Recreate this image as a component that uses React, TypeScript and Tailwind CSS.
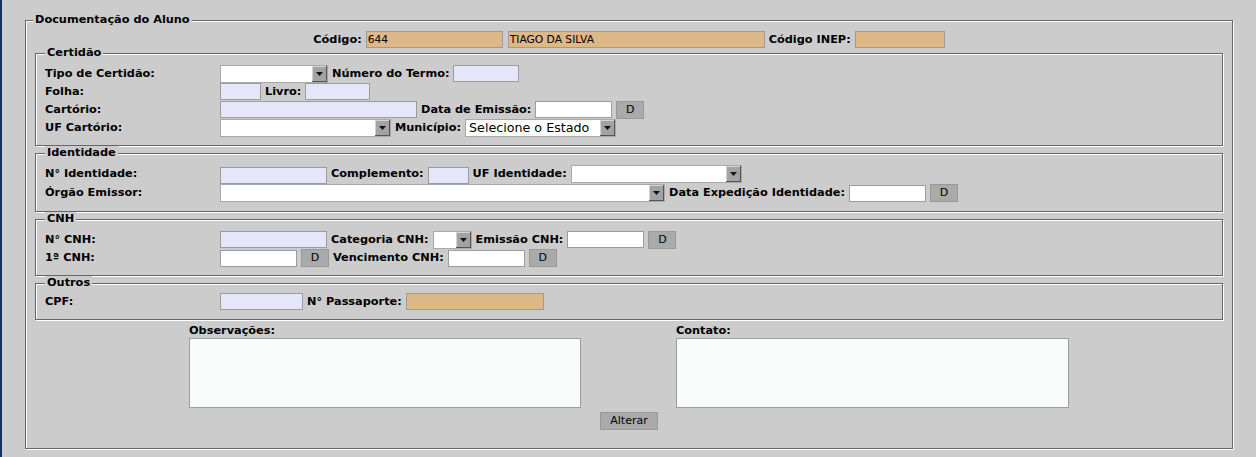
import { FC, ReactNode } from "react";

interface GroupProps {
  title: string;
  outer?: boolean;
  className?: string;
  children: ReactNode;
}

const Group: FC<GroupProps> = ({ title, outer, className = "", children }) => (
  <div
    className={`relative border border-[#666666] shadow-[1px_1px_0_#ffffff,inset_1px_1px_0_#ffffff] ${className}`}
  >
    <span
      className={`absolute -top-[8px] ${
        outer ? "left-[7px]" : "left-[9px]"
      } bg-[#cccccc] px-[2px] text-[11.3px] font-bold leading-[14px] text-black whitespace-nowrap`}
    >
      {title}
    </span>
    {children}
  </div>
);

const Label: FC<{ children: ReactNode; className?: string }> = ({
  children,
  className = "",
}) => (
  <span
    className={`text-[11.3px] font-bold leading-[14px] text-black whitespace-nowrap ${className}`}
  >
    {children}
  </span>
);

const tones = {
  lav: "bg-[#e6e6fa]",
  white: "bg-white",
  tan: "bg-[#deb887]",
};

const Field: FC<{
  className: string;
  tone?: keyof typeof tones;
  value?: string;
}> = ({ className, tone = "white", value = "" }) => (
  <input
    readOnly
    value={value}
    className={`h-[17px] shrink-0 border border-[#9c9c9c] px-[1px] text-[10.7px] leading-[15px] text-black outline-none ${tones[tone]} ${className}`}
  />
);

const Select: FC<{ className: string; text?: string }> = ({
  className,
  text = "",
}) => (
  <div
    className={`flex h-[18px] shrink-0 border border-[#a8a8a8] bg-white ${className}`}
  >
    <span className="flex-1 overflow-hidden whitespace-nowrap pl-[3px] text-[12.7px] leading-[16px] text-black">
      {text}
    </span>
    <span className="flex w-[15px] items-center justify-center bg-[#a3a3a3] shadow-[inset_-1px_-1px_0_#555555,inset_1px_1px_0_#d4d4d4]">
      <svg width="7" height="4" viewBox="0 0 7 4">
        <path d="M0 0h7L3.5 4z" fill="#111111" />
      </svg>
    </span>
  </div>
);

const Btn: FC<{ children: ReactNode; className: string }> = ({
  children,
  className,
}) => (
  <button
    className={`h-[18px] shrink-0 border border-[#999999] bg-[#aaaaaa] text-[11px] leading-[16px] text-black ${className}`}
  >
    {children}
  </button>
);

const Row: FC<{ label: string; className: string; children: ReactNode }> = ({
  label,
  className,
  children,
}) => (
  <div className={`flex items-center gap-[4px] ${className}`}>
    <Label className="w-[171px] shrink-0">{label}</Label>
    {children}
  </div>
);

const App: FC = () => {
  return (
    <div className="h-[457px] w-[1256px] overflow-hidden border-l-2 border-[#14306e] bg-[#cccccc] pl-[23px] pt-[20px] font-['DejaVu_Sans',Verdana,sans-serif]">
      <Group
        title="Documentação do Aluno"
        outer
        className="h-[429px] w-[1208px] px-[9px] pt-[10px]"
      >
        <div className="flex h-[17px] items-center justify-center gap-[4px]">
          <Label>Código:</Label>
          <Field className="w-[137px]" tone="tan" value="644" />
          <Field className="ml-[1px] w-[257px]" tone="tan" value="TIAGO DA SILVA" />
          <Label>Código INEP:</Label>
          <Field className="w-[90px]" tone="tan" />
        </div>

        <Group title="Certidão" className="mt-[5px] h-[93px] pl-[9px] pt-[10px]">
          <Row label="Tipo de Certidão:" className="h-[19px]">
            <Select className="w-[108px]" />
            <Label>Número do Termo:</Label>
            <Field className="w-[66px]" tone="lav" />
          </Row>
          <Row label="Folha:" className="h-[17px]">
            <Field className="w-[41px]" tone="lav" />
            <Label>Livro:</Label>
            <Field className="w-[65px]" tone="lav" />
          </Row>
          <Row label="Cartório:" className="h-[19px]">
            <Field className="w-[197px]" tone="lav" />
            <Label>Data de Emissão:</Label>
            <Field className="w-[77px]" />
            <Btn className="w-[28px]">D</Btn>
          </Row>
          <Row label="UF Cartório:" className="h-[18px]">
            <Select className="w-[171px]" />
            <Label>Município:</Label>
            <Select className="w-[151px]" text="Selecione o Estado" />
          </Row>
        </Group>

        <Group title="Identidade" className="mt-[7px] h-[59px] pl-[9px] pt-[10px]">
          <Row label="N° Identidade:" className="h-[20px]">
            <Field className="mt-[2px] w-[107px]" tone="lav" />
            <Label>Complemento:</Label>
            <Field className="mt-[2px] w-[41px]" tone="lav" />
            <Label>UF Identidade:</Label>
            <Select className="w-[171px]" />
          </Row>
          <Row label="Órgão Emissor:" className="h-[18px]">
            <Select className="w-[445px]" />
            <Label>Data Expedição Identidade:</Label>
            <Field className="w-[77px]" />
            <Btn className="w-[28px]">D</Btn>
          </Row>
        </Group>

        <Group title="CNH" className="mt-[7px] h-[57px] pl-[9px] pt-[10px]">
          <Row label="N° CNH:" className="h-[19px]">
            <Field className="w-[107px]" tone="lav" />
            <Label>Categoria CNH:</Label>
            <Select className="w-[39px]" />
            <Label>Emissão CNH:</Label>
            <Field className="w-[77px]" />
            <Btn className="w-[28px]">D</Btn>
          </Row>
          <Row label="1ª CNH:" className="h-[18px]">
            <Field className="w-[77px]" />
            <Btn className="w-[28px]">D</Btn>
            <Label>Vencimento CNH:</Label>
            <Field className="w-[77px]" />
            <Btn className="w-[28px]">D</Btn>
          </Row>
        </Group>

        <Group title="Outros" className="mt-[7px] h-[37px] pl-[9px] pt-[9px]">
          <Row label="CPF:" className="h-[17px]">
            <Field className="w-[83px]" tone="lav" />
            <Label>N° Passaporte:</Label>
            <Field className="w-[138px]" tone="tan" />
          </Row>
        </Group>

        <div className="mt-[4px] flex justify-center gap-[95px]">
          <div className="flex flex-col">
            <Label>Observações:</Label>
            <textarea
              readOnly
              className="h-[70px] w-[392px] resize-none border border-[#9c9c9c] bg-[#f7fbfa] outline-none"
            />
          </div>
          <div className="flex flex-col">
            <Label>Contato:</Label>
            <textarea
              readOnly
              className="h-[70px] w-[393px] resize-none border border-[#9c9c9c] bg-[#f7fbfa] outline-none"
            />
          </div>
        </div>
        <div className="mt-[4px] flex justify-center">
          <Btn className="w-[58px]">Alterar</Btn>
        </div>
      </Group>
    </div>
  );
};

export default App;
